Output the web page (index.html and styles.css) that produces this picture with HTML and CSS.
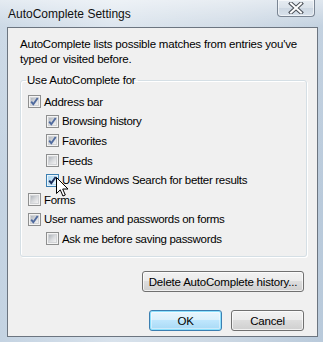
FILE: index.html
```html
<!DOCTYPE html>
<html>

<head>
	<meta charset="utf-8">
	<link rel="stylesheet" href="styles.css">
</head>

<body>
	<div class="window">
		<div class="title-bar">
			<span class="title">AutoComplete Settings</span>
			<div class="close-btn">
				<svg width="16" height="12" viewBox="0 0 16 12">
					<path d="M3 1.5l10 9M13 1.5l-10 9" stroke="#4a4f57" stroke-width="4" stroke-linecap="square" />
					<path d="M3 1.5l10 9M13 1.5l-10 9" stroke="#fff" stroke-width="2" stroke-linecap="square" />
				</svg>
			</div>
		</div>

		<div class="client">
			<p class="intro">AutoComplete lists possible matches from entries you've typed or visited before.</p>

			<fieldset class="group">
				<legend>Use AutoComplete for</legend>
				<div class="check-list">
					<div class="check-row"><span class="box checked"></span>Address bar</div>
					<div class="check-row sub"><span class="box checked"></span>Browsing history</div>
					<div class="check-row sub"><span class="box checked"></span>Favorites</div>
					<div class="check-row sub"><span class="box"></span>Feeds</div>
					<div class="check-row sub"><span class="box checked hover"></span>Use Windows Search for better results</div>
					<div class="check-row"><span class="box"></span>Forms</div>
					<div class="check-row"><span class="box checked"></span>User names and passwords on forms</div>
					<div class="check-row sub"><span class="box"></span>Ask me before saving passwords</div>
				</div>
			</fieldset>

			<div class="btn-row delete-row">
				<button class="btn btn-wide">Delete AutoComplete history...</button>
			</div>

			<div class="btn-row">
				<button class="btn default">OK</button>
				<button class="btn">Cancel</button>
			</div>
		</div>

		<svg class="cursor" width="13" height="21" viewBox="0 0 13 21">
			<path d="M0.5 0.5v16l3.8-3.7 2.6 6.2 2.4-1-2.6-6h5.3z" fill="#fff" stroke="#000" stroke-width="1" stroke-linejoin="miter" />
		</svg>
	</div>
</body>

</html>
```

FILE: styles.css
```css
body {
	margin: 0;
	font-family: "Liberation Sans", Arial, sans-serif;
	font-size: 11.5px;
	color: #000;
	background: #cdd9e5;
}

.window {
	position: relative;
	width: 323px;
	height: 342px;
	box-sizing: border-box;
	padding: 0 5px 5px 7px;
	background:
		linear-gradient(180deg, rgba(255, 255, 255, 0.55) 0px, rgba(255, 255, 255, 0.15) 26px, rgba(255, 255, 255, 0) 60%),
		linear-gradient(90deg, #c4d3e2 0%, #d8e2ec 35%, #cbd7e3 70%, #b9cadb 100%);
	overflow: hidden;
}

.title-bar {
	display: flex;
	align-items: flex-start;
	height: 27px;
}

.title {
	margin: 7px 0 0 1px;
	line-height: 15px;
	font-size: 12px;
	color: #111;
}

.close-btn {
	margin: 0 3px 0 auto;
	width: 38px;
	height: 17px;
	box-sizing: border-box;
	border: 1px solid #7a8593;
	border-top: none;
	border-radius: 0 0 4px 4px;
	background: linear-gradient(180deg, #e6ecf2 0%, #dae2ea 50%, #cdd7e2 51%, #d9e2ec 100%);
	box-shadow: inset 0 0 0 1px rgba(255, 255, 255, 0.6);
	display: flex;
	align-items: center;
	justify-content: center;
}

.client {
	height: 310px;
	box-sizing: border-box;
	border: 1px solid #6c7580;
	background: #f0f0f0;
	padding: 0 10px 0 12px;
	display: flex;
	flex-direction: column;
}

.intro {
	margin: 9px 0 0;
	line-height: 15px;
	width: 285px;
	letter-spacing: -0.2px;
}

.group {
	margin: 6px 0 0;
	padding: 0 0 10px 7px;
	width: 287px;
	height: 184px;
	box-sizing: border-box;
	border: 1px solid #d5dfe5;
	border-radius: 3px;
	box-shadow: inset 1px 1px 0 #fff, 1px 1px 0 #fff;
	flex: none;
}

.group legend {
	padding: 0 2px 0 1px;
	margin-left: -2px;
	line-height: 15px;
	letter-spacing: -0.2px;
}

.check-list {
	display: grid;
	grid-auto-rows: 19.6px;
	margin-top: 4px;
}

.check-row {
	display: flex;
	align-items: center;
	letter-spacing: -0.3px;
}

.check-row.sub {
	padding-left: 18px;
}

.box {
	width: 13px;
	height: 13px;
	box-sizing: border-box;
	margin-right: 3px;
	border: 1px solid #8e8f8f;
	background: #f4f4f4;
	box-shadow: inset 0 0 0 1px #f4f4f4, inset 0 0 0 2px #d2d4d7;
	position: relative;
	flex: none;
}

.box::before {
	content: "";
	position: absolute;
	inset: 2px;
	background: linear-gradient(135deg, #b0b5bb 0%, #d8dadd 50%, #f2f2f3 100%);
}

.box.checked::after {
	content: "";
	position: absolute;
	inset: 0;
	background: url("data:image/svg+xml,%3Csvg xmlns='http://www.w3.org/2000/svg' viewBox='0 0 11 11'%3E%3Cpath d='M2.2 5.6l2.1 2.6 4.4-6.2' fill='none' stroke='%234f6a9e' stroke-width='1.9'/%3E%3C/svg%3E") no-repeat center / 11px 11px;
}

.box.hover {
	border-color: #3c7fb1;
	box-shadow: inset 0 0 0 1px #eaf4fb, inset 0 0 0 2px #b9dcf3;
}

.box.hover::before {
	background: linear-gradient(135deg, #a9d6f3 0%, #cde8f8 50%, #eef8fe 100%);
}

.box.hover::after {
	background: url("data:image/svg+xml,%3Csvg xmlns='http://www.w3.org/2000/svg' viewBox='0 0 11 11'%3E%3Cpath d='M2.2 5.6l2.1 2.6 4.4-6.2' fill='none' stroke='%231e2f5c' stroke-width='2'/%3E%3C/svg%3E") no-repeat center / 11px 11px;
}

.btn-row {
	display: flex;
	justify-content: flex-end;
	gap: 9px;
	padding-right: 3px;
	margin-top: 18px;
}

.delete-row {
	margin-top: 14px;
}

.btn {
	font-family: inherit;
	font-size: 11.5px;
	letter-spacing: -0.2px;
	color: #000;
	height: 21px;
	width: 73px;
	padding: 0;
	box-sizing: border-box;
	border: 1px solid #707070;
	border-radius: 3px;
	background: linear-gradient(180deg, #f2f2f2 0%, #ebebeb 49%, #dddddd 50%, #cfcfcf 100%);
	box-shadow: inset 0 0 0 1px rgba(255, 255, 255, 0.7);
}

.btn-wide {
	width: 162px;
}

.btn.default {
	border-color: #3c7fb1;
	background: linear-gradient(180deg, #eaf6fd 0%, #d9f0fc 49%, #bee6fd 50%, #a7d9f5 100%);
	box-shadow: inset 0 0 0 1px #8ce0fd, inset 0 0 0 2px rgba(255, 255, 255, 0.4);
}

.cursor {
	position: absolute;
	left: 56px;
	top: 177px;
}
```
